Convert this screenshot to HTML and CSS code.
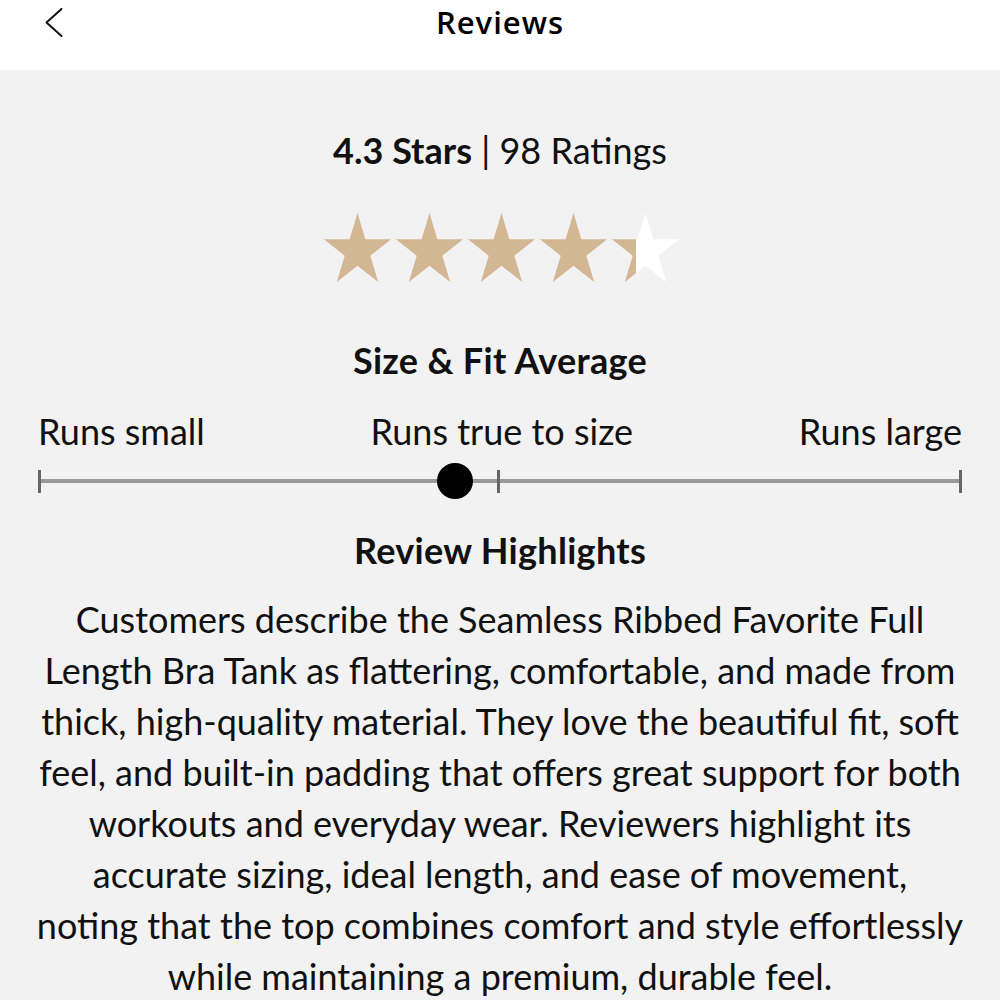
FILE: index.html
```html
<!DOCTYPE html>
<html>
<head>
<meta charset="utf-8">
<link rel="stylesheet" href="styles.css">
</head>
<body>
<header class="topbar">
  <svg class="back" width="24" height="34" viewBox="0 0 24 34"><path d="M20.5 3 L5.5 16.5 L20.5 30" fill="none" stroke="#111" stroke-width="2" stroke-linecap="round" stroke-linejoin="round"/></svg>
  <h1 class="title">Reviews</h1>
</header>
<main class="content">
  <div class="summary"><b>4.3 Stars</b> | 98 Ratings</div>
  <div class="stars">
    <svg class="star" viewBox="0 0 100 95" preserveAspectRatio="none"><path d="M50 0 L61.8 36.3 L100 36.3 L69.1 58.8 L80.9 95 L50 72.6 L19.1 95 L30.9 58.8 L0 36.3 L38.2 36.3 Z" fill="#d3b693"/></svg>
    <svg class="star" viewBox="0 0 100 95" preserveAspectRatio="none"><path d="M50 0 L61.8 36.3 L100 36.3 L69.1 58.8 L80.9 95 L50 72.6 L19.1 95 L30.9 58.8 L0 36.3 L38.2 36.3 Z" fill="#d3b693"/></svg>
    <svg class="star" viewBox="0 0 100 95" preserveAspectRatio="none"><path d="M50 0 L61.8 36.3 L100 36.3 L69.1 58.8 L80.9 95 L50 72.6 L19.1 95 L30.9 58.8 L0 36.3 L38.2 36.3 Z" fill="#d3b693"/></svg>
    <svg class="star" viewBox="0 0 100 95" preserveAspectRatio="none"><path d="M50 0 L61.8 36.3 L100 36.3 L69.1 58.8 L80.9 95 L50 72.6 L19.1 95 L30.9 58.8 L0 36.3 L38.2 36.3 Z" fill="#d3b693"/></svg>
    <svg class="star" viewBox="0 0 100 95" preserveAspectRatio="none"><defs><linearGradient id="part"><stop offset="0.36" stop-color="#d3b693"/><stop offset="0.36" stop-color="#ffffff"/></linearGradient></defs><path d="M50 0 L61.8 36.3 L100 36.3 L69.1 58.8 L80.9 95 L50 72.6 L19.1 95 L30.9 58.8 L0 36.3 L38.2 36.3 Z" fill="url(#part)"/></svg>
  </div>
  <h2 class="heading heading-fit">Size &amp; Fit Average</h2>
  <div class="fit-labels">
    <span>Runs small</span>
    <span>Runs true to size</span>
    <span>Runs large</span>
  </div>
  <div class="track">
    <span class="tick tick-left"></span>
    <span class="tick tick-mid"></span>
    <span class="tick tick-right"></span>
    <span class="dot"></span>
  </div>
  <h2 class="heading heading-hl">Review Highlights</h2>
  <p class="highlight">Customers describe the Seamless Ribbed Favorite Full<br>Length Bra Tank as flattering, comfortable, and made from<br>thick, high-quality material. They love the beautiful fit, soft<br>feel, and built-in padding that offers great support for both<br>workouts and everyday wear. Reviewers highlight its<br>accurate sizing, ideal length, and ease of movement,<br>noting that the top combines comfort and style effortlessly<br>while maintaining a premium, durable feel.</p>
</main>
</body>
</html>
```
FILE: styles.css
```css
html, body {
  margin: 0;
  padding: 0;
  background: #f2f2f2;
  font-family: Lato, "Open Sans", sans-serif;
  color: #111;
}
.topbar {
  height: 70px;
  background: #fff;
  display: flex;
  justify-content: center;
  position: relative;
}
.back {
  position: absolute;
  left: 41px;
  top: 6px;
}
.title {
  margin: 0;
  padding-top: 2px;
  font-family: "Open Sans", Lato, sans-serif;
  font-size: 31px;
  line-height: 40px;
  font-weight: 600;
  letter-spacing: 1px;
  color: #000;
}
.content {
  padding: 0 38px;
  display: flex;
  flex-direction: column;
}
.summary {
  margin-top: 58px;
  text-align: center;
  font-size: 36px;
  line-height: 44px;
}
.summary b { font-weight: 700; }
.stars {
  display: flex;
  justify-content: center;
  gap: 5px;
  margin-top: 41px;
  padding-left: 2px;
}
.star {
  width: 67px;
  height: 69px;
}
.heading {
  margin: 0;
  text-align: center;
  font-size: 36px;
  line-height: 44px;
  font-weight: 700;
  letter-spacing: 0.3px;
}
.heading-fit { margin-top: 56px; }
.fit-labels {
  margin-top: 27px;
  display: flex;
  justify-content: space-between;
  font-size: 36px;
  line-height: 44px;
}
.track {
  position: relative;
  height: 40px;
  margin-top: 7px;
}
.track::before {
  content: "";
  position: absolute;
  left: 0;
  right: 0;
  top: 19px;
  height: 4px;
  background: #9a9a9a;
}
.tick {
  position: absolute;
  top: 10px;
  width: 3px;
  height: 23px;
  background: #666;
}
.tick-left { left: 0; }
.tick-right { right: 0; }
.tick-mid { left: 459px; }
.dot {
  position: absolute;
  left: 399px;
  top: 3px;
  width: 36px;
  height: 36px;
  border-radius: 50%;
  background: #000;
}
.heading-hl { margin-top: 28px; }
.highlight {
  margin: 22px -20px 0;
  text-align: center;
  font-size: 36px;
  line-height: 51px;
  white-space: nowrap;
}
```
